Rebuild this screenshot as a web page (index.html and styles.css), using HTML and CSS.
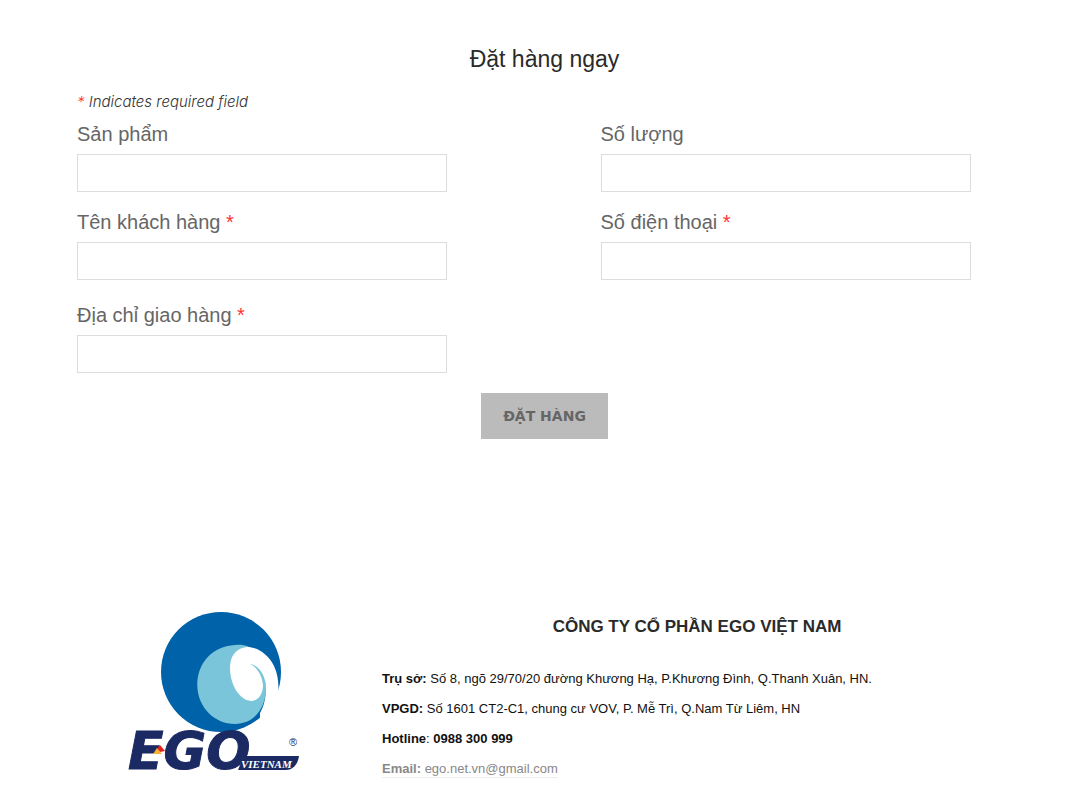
FILE: index.html
```html
<!DOCTYPE html>
<html lang="vi">
<head>
    <meta charset="UTF-8">
    <meta name="viewport" content="width=device-width, initial-scale=1.0">
    <title>Đặt hàng ngay</title>
    <link rel="stylesheet" href="styles.css">
</head>
<body>

    <main class="order">
        <h2>Đặt hàng ngay</h2>
        <form>
            <p class="required-note"><span class="star">*</span> Indicates required field</p>
            <div class="fields">
                <div class="field">
                    <label for="san-pham">Sản phẩm</label>
                    <input type="text" id="san-pham">
                </div>
                <div class="field">
                    <label for="so-luong">Số lượng</label>
                    <input type="text" id="so-luong">
                </div>
                <div class="field">
                    <label for="khach-hang">Tên khách hàng <span class="star">*</span></label>
                    <input type="text" id="khach-hang" required>
                </div>
                <div class="field">
                    <label for="dien-thoai">Số điện thoại <span class="star">*</span></label>
                    <input type="tel" id="dien-thoai" required>
                </div>
            </div>
            <div class="fields">
                <div class="field">
                    <label for="dia-chi">Địa chỉ giao hàng <span class="star">*</span></label>
                    <input type="text" id="dia-chi" required>
                </div>
            </div>
            <button type="submit">ĐẶT HÀNG</button>
        </form>
    </main>

    <footer class="footer">
        <svg class="logo" viewBox="0 0 180 164" role="img" aria-label="EGO Việt Nam">
            <circle cx="98" cy="62" r="60" fill="#0062a8"/>
            <!-- wave -->
            <path d="M124 36 C119 34.500 113 34.500 108 35.500 C88 38 74 54 74.300 76 C75 98 92 114 112 114 C131 114 143 98 143 78 C143 58 135 40 124 36 Z" fill="#7ac5d9"/>
            <path d="M153.300 92.700 C156 83 157 69 151 56 C145 44 134 37 124 37 C113 38 107 46 107 58 C107 75 117 91 129 91 C137 90 140 82 140 75 C139 65 134 57 127 54 C136 55 143 66 143 78 C143 87 141 96 137 103 L137 112 L152 112 L162 95 Z" fill="#fff"/>
            <text class="logo-name" x="5" y="159">EGO</text>
            <path d="M121 146 L176 146 C175 154 170 160 163 160 L115 160 Z" fill="#1b2a63"/>
            <path d="M33 140 L37 135 L42 141 L37 142 Z" fill="#e2231a"/>
            <path d="M30 144 L34 138 L39 144 Z" fill="#f9b233"/>
            <text class="logo-sub" x="118" y="158">VIETNAM</text>
            <text class="logo-mark" x="166" y="136">®</text>
        </svg>
        <div class="company">
            <h3>CÔNG TY CỔ PHẦN EGO VIỆT NAM</h3>
            <p><strong>Trụ sở:</strong> Số 8, ngõ 29/70/20 đường Khương Hạ, P.Khương Đình, Q.Thanh Xuân, HN.</p>
            <p><strong>VPGD:</strong> Số 1601 CT2-C1, chung cư VOV, P. Mễ Trì, Q.Nam Từ Liêm, HN</p>
            <p><strong>Hotline</strong>: <strong>0988 300 999</strong></p>
            <p><a href="mailto:ego.net.vn@gmail.com"><strong>Email:</strong> ego.net.vn@gmail.com</a></p>
        </div>
    </footer>

</body>
</html>
```
FILE: styles.css
```css
* {
    box-sizing: border-box;
}

body {
    margin: 0;
    background-color: #fff;
    font-family: "Liberation Sans", Arial, sans-serif;
    color: #111;
}

.order {
    padding: 43px 63px 0 77px;
}

h2 {
    margin: 0 0 19px;
    font-size: 23px;
    font-weight: 400;
    line-height: 32px;
    text-align: center;
    color: #2a2a2a;
}

.required-note {
    margin: 0 0 12px;
    font-family: Inter, sans-serif;
    font-size: 15px;
    font-style: italic;
    font-weight: 300;
    line-height: 16px;
    color: #333;
}

.star {
    color: #f33;
}

.fields {
    display: grid;
    grid-template-columns: 1fr 1fr;
    gap: 18px 112px;
    margin-bottom: 23px;
}

.field label {
    display: block;
    margin-bottom: 8px;
    font-size: 20px;
    line-height: 24px;
    color: #666;
}

.field input {
    display: block;
    width: 90%;
    height: 38px;
    padding: 0 10px;
    border: 1px solid #ddd;
    background-color: #fff;
    font-size: 14px;
}

button {
    display: block;
    height: 46px;
    margin: -3px auto 0;
    padding: 0 22px;
    border: none;
    background-color: #bbb;
    color: #666;
    font-family: "DejaVu Sans", sans-serif;
    font-size: 14px;
    font-weight: 700;
    cursor: pointer;
}

.footer {
    display: flex;
    align-items: flex-start;
    padding: 171px 63px 20px 123px;
}

.logo {
    flex: none;
    width: 180px;
    height: 164px;
    margin-right: 79px;
}

.logo-name {
    font: italic 700 52px "DejaVu Sans", sans-serif;
    fill: #1b2a63;
    stroke: #1b2a63;
    stroke-width: 1px;
}

.logo-sub {
    font: italic 700 11px "Liberation Serif", serif;
    fill: #fff;
}

.logo-mark {
    font: 11px "Liberation Sans", sans-serif;
    fill: #1b2a63;
}

.company {
    flex: 1;
}

h3 {
    margin: 5px 0 25px;
    font-size: 17px;
    line-height: 24px;
    text-align: center;
    color: #2a2a2a;
}

.company p {
    margin: 0;
    font-size: 13px;
    line-height: 30px;
}

.company a {
    padding-bottom: 1px;
    border-bottom: 1px solid #eee;
    color: #888;
    text-decoration: none;
}
```
